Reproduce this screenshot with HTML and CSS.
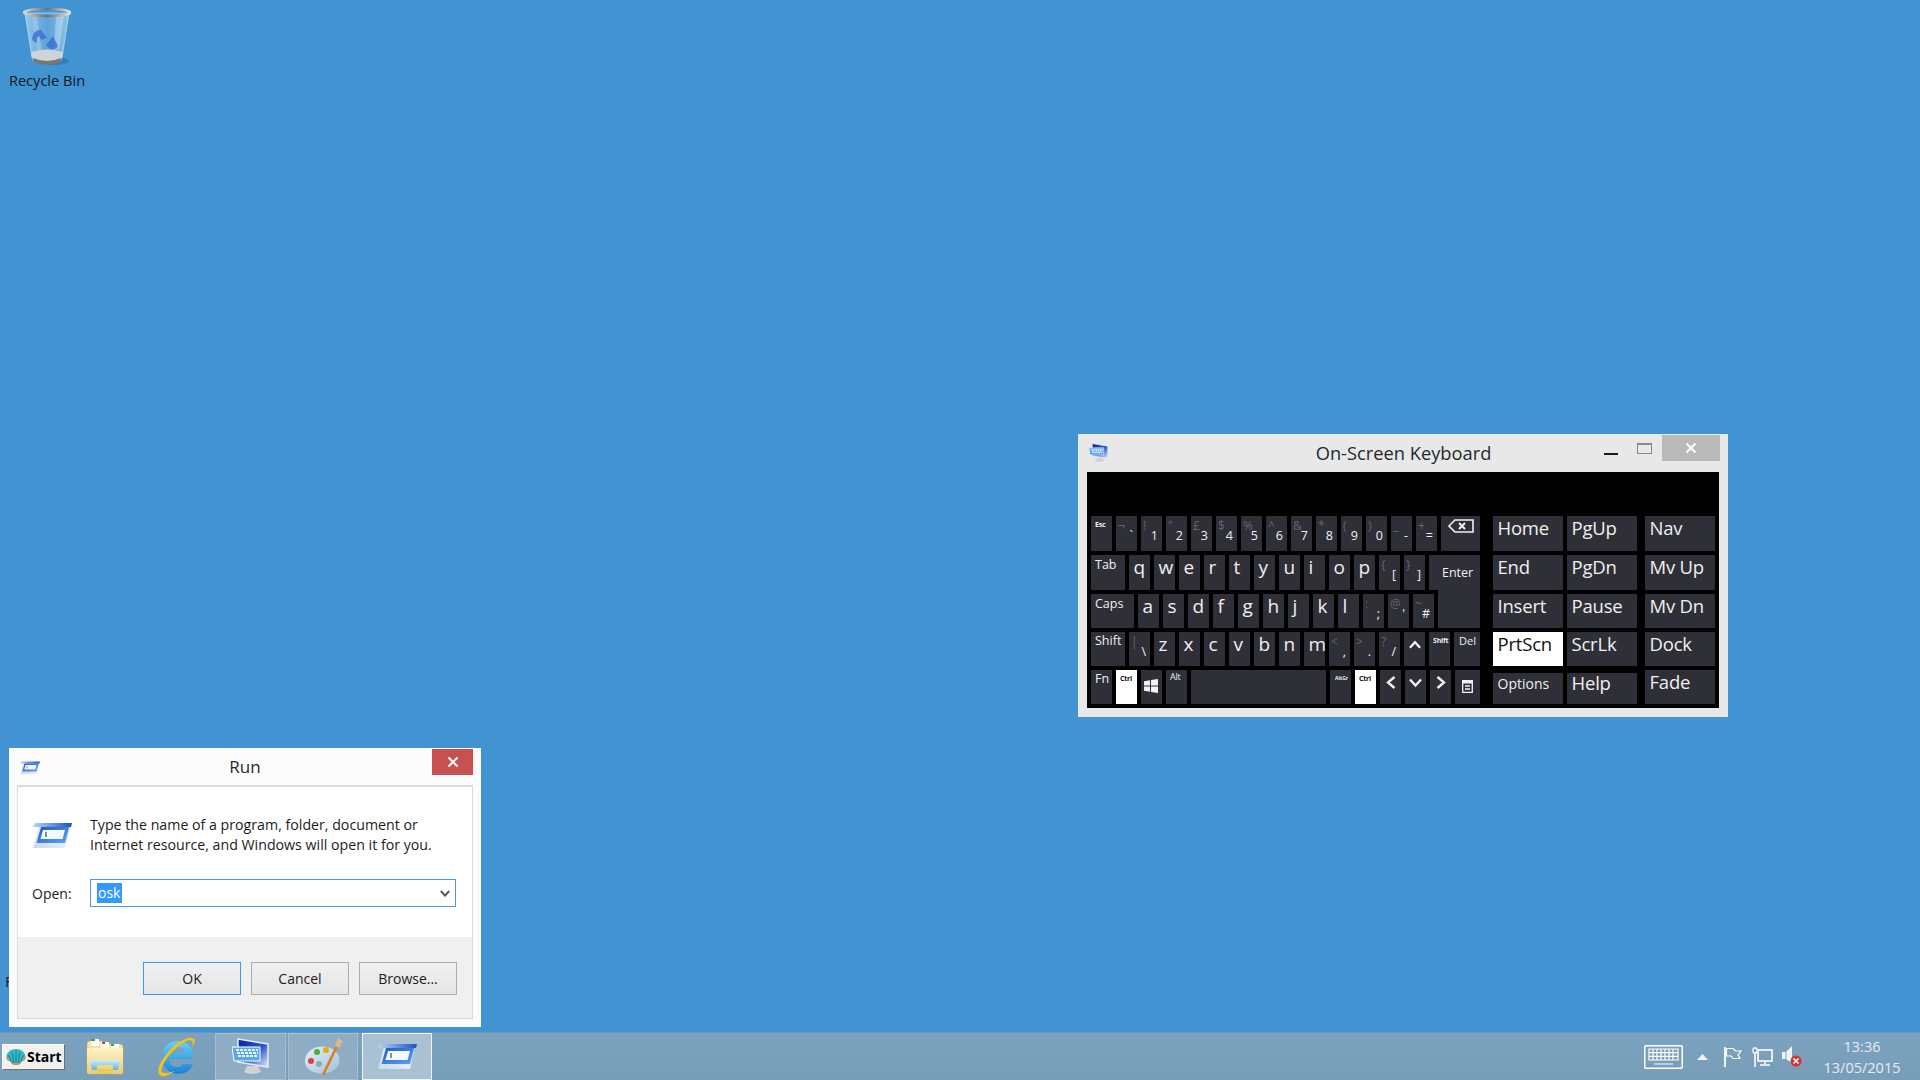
FILE: index.html
```html
<!DOCTYPE html>
<html lang="en">
<head>
    <meta charset="UTF-8">
    <meta name="viewport" content="width=device-width, initial-scale=1.0">
    <title>Desktop</title>
    <link rel="stylesheet" href="styles.css">
</head>
<body>
    <svg class="defs" width="0" height="0">
        <defs>
            <linearGradient id="runTop" x1="0" x2="1" y1="0" y2="0">
                <stop offset="0" stop-color="#b8d4f2"/>
                <stop offset="1" stop-color="#1c50c0"/>
            </linearGradient>
            <linearGradient id="runBody" x1="0" x2="1" y1="1" y2="0">
                <stop offset="0" stop-color="#c8d8ee"/>
                <stop offset="0.5" stop-color="#e4eefa"/>
                <stop offset="1" stop-color="#a8c8f0"/>
            </linearGradient>
            <linearGradient id="runInner" x1="0" x2="1" y1="0" y2="1">
                <stop offset="0" stop-color="#1f58cc"/>
                <stop offset="1" stop-color="#5aa4f2"/>
            </linearGradient>
            <linearGradient id="glass" x1="0" x2="1" y1="0" y2="0">
                <stop offset="0" stop-color="#a8d2ee" stop-opacity="0.85"/>
                <stop offset="0.5" stop-color="#6fb2e2" stop-opacity="0.55"/>
                <stop offset="1" stop-color="#a4d0ec" stop-opacity="0.8"/>
            </linearGradient>
            <linearGradient id="rim" x1="0" x2="1" y1="0" y2="0">
                <stop offset="0" stop-color="#d6d6d6"/>
                <stop offset="0.5" stop-color="#6f6f6f"/>
                <stop offset="1" stop-color="#e2e2e2"/>
            </linearGradient>
            <linearGradient id="folderBack" x1="0" x2="0" y1="0" y2="1">
                <stop offset="0" stop-color="#fbe9a4"/>
                <stop offset="1" stop-color="#e8c366"/>
            </linearGradient>
            <linearGradient id="folderFront" x1="0" x2="0" y1="0" y2="1">
                <stop offset="0" stop-color="#fdf3c6"/>
                <stop offset="1" stop-color="#eccb72"/>
            </linearGradient>
            <linearGradient id="folderBlue" x1="0" x2="0" y1="0" y2="1">
                <stop offset="0" stop-color="#cdeefc"/>
                <stop offset="1" stop-color="#61b2e4"/>
            </linearGradient>
            <linearGradient id="ieBlue" x1="0" x2="0" y1="0" y2="1">
                <stop offset="0" stop-color="#66d0f6"/>
                <stop offset="1" stop-color="#1a83d6"/>
            </linearGradient>
            <linearGradient id="screen" x1="0" x2="1" y1="0" y2="1">
                <stop offset="0" stop-color="#0a1f9c"/>
                <stop offset="0.55" stop-color="#2a58c8"/>
                <stop offset="1" stop-color="#e4eefb"/>
            </linearGradient>
            <linearGradient id="palette" x1="0" x2="1" y1="0" y2="1">
                <stop offset="0" stop-color="#e6f0f6"/>
                <stop offset="1" stop-color="#9fc1d8"/>
            </linearGradient>
            <symbol id="runIcon" viewBox="0 0 40 26">
                <path d="M7 3H38L33 25H1Z" fill="url(#runBody)"/>
                <path d="M3 0H40L39 4H1Z" fill="url(#runTop)"/>
                <path d="M9 4H37L33 20H4.500Z" fill="url(#runInner)"/>
                <path d="M11 7H33L30.500 16H8.500Z" fill="#f4f9ff"/>
                <path d="M14 9V14" stroke="#444" stroke-width="1.200"/>
            </symbol>
            <symbol id="oskIcon" viewBox="0 0 38 38">
                <path d="M6 1L36 6V29L6 24Z" fill="url(#screen)" stroke="#e4ecf6" stroke-width="1.500"/>
                <path d="M15 28H26L29 34Q20 38 12 34Z" fill="#d2d2d2"/>
                <path d="M0 9H28V23H2Z" fill="#5ca6ea" stroke="#ffffff"/>
                <path d="M4 12H26M5 15H26M6 18H26" stroke="#e8f4ff" stroke-width="2" stroke-dasharray="3 1"/>
            </symbol>
        </defs>
    </svg>

    <main class="desktop">
        <div class="desk-icon">
            <svg class="bin" viewBox="0 0 48 58" width="48" height="58">
                <ellipse cx="30" cy="53" rx="16" ry="4" fill="#2d6f9f" opacity="0.6"/>
                <path d="M2 5L9 50Q24 57 39 50L46 5Z" fill="url(#glass)" stroke="#cfe6f5" stroke-opacity="0.6"/>
                <path d="M9 8L14 42L19 43L14 8Z" fill="#ffffff" opacity="0.2"/>
                <path d="M33 8L31 42L36 41L41 8Z" fill="#ffffff" opacity="0.3"/>
                <path d="M9 32Q10 21 18 22L24 30L18 32L16 28Q13 29 14 35ZM23 37L30 28L33 34Q38 42 27 41Z" fill="#3a6ed0" opacity="0.8"/>
                <ellipse cx="24" cy="4.500" rx="23" ry="3.500" fill="none" stroke="url(#rim)" stroke-width="2.500"/>
                <path d="M8 44Q24 39 40 44L38 53Q24 59 10 53Z" fill="#cfd4d8"/>
                <path d="M10 50Q24 56 38 50L37.500 54Q24 60 10.500 54Z" fill="#777"/>
            </svg>
            <span class="desk-label">Recycle Bin</span>
        </div>

        <span class="stray-label">F</span>

        <section class="osk">
            <header class="osk-title">
                <svg class="osk-small" width="20" height="20"><use href="#oskIcon"/></svg>
                <h1>On-Screen Keyboard</h1>
                <div class="osk-controls">
                    <span class="ctl-min"></span>
                    <span class="ctl-max"></span>
                    <span class="ctl-close">
                        <svg width="12" height="12" viewBox="0 0 12 12"><path d="M1.500 1.500L10.500 10.500M10.500 1.500L1.500 10.500" stroke="#fff" stroke-width="2"/></svg>
                    </span>
                </div>
            </header>
            <div class="kb">
                <div class="keys-main">
                    <div class="kb-row r35">
                        <div class="key tiny">Esc</div>
                        <div class="key dual"><span class="sup">¬</span><span class="main">`</span></div>
                        <div class="key dual"><span class="sup">!</span><span class="main">1</span></div>
                        <div class="key dual"><span class="sup">"</span><span class="main">2</span></div>
                        <div class="key dual"><span class="sup">£</span><span class="main">3</span></div>
                        <div class="key dual"><span class="sup">$</span><span class="main">4</span></div>
                        <div class="key dual"><span class="sup">%</span><span class="main">5</span></div>
                        <div class="key dual"><span class="sup">^</span><span class="main">6</span></div>
                        <div class="key dual"><span class="sup">&amp;</span><span class="main">7</span></div>
                        <div class="key dual"><span class="sup">*</span><span class="main">8</span></div>
                        <div class="key dual"><span class="sup">(</span><span class="main">9</span></div>
                        <div class="key dual"><span class="sup">)</span><span class="main">0</span></div>
                        <div class="key dual"><span class="sup">_</span><span class="main">-</span></div>
                        <div class="key dual"><span class="sup">+</span><span class="main">=</span></div>
                        <div class="key w39 icon-key top">
                            <svg width="26" height="14" viewBox="0 0 26 14"><path d="M1 7L7 1H25V13H7Z" fill="none" stroke="#f2f2f2" stroke-width="1.600"/><path d="M11 4L17 10M17 4L11 10" stroke="#f2f2f2" stroke-width="2"/></svg>
                        </div>
                    </div>
                    <div class="kb-row r35">
                        <div class="key w34 label">Tab</div>
                        <div class="key letter">q</div>
                        <div class="key letter">w</div>
                        <div class="key letter">e</div>
                        <div class="key letter">r</div>
                        <div class="key letter">t</div>
                        <div class="key letter">y</div>
                        <div class="key letter">u</div>
                        <div class="key letter">i</div>
                        <div class="key letter">o</div>
                        <div class="key letter">p</div>
                        <div class="key dual"><span class="sup">{</span><span class="main">[</span></div>
                        <div class="key dual"><span class="sup">}</span><span class="main">]</span></div>
                        <div class="key w51 enter">Enter</div>
                    </div>
                    <div class="kb-row r34">
                        <div class="key w43 label">Caps</div>
                        <div class="key letter">a</div>
                        <div class="key letter">s</div>
                        <div class="key letter">d</div>
                        <div class="key letter">f</div>
                        <div class="key letter">g</div>
                        <div class="key letter">h</div>
                        <div class="key letter">j</div>
                        <div class="key letter">k</div>
                        <div class="key letter">l</div>
                        <div class="key dual"><span class="sup">:</span><span class="main">;</span></div>
                        <div class="key dual"><span class="sup">@</span><span class="main">'</span></div>
                        <div class="key dual"><span class="sup">~</span><span class="main">#</span></div>
                        <div class="key w42 enter-foot"></div>
                    </div>
                    <div class="kb-row r34">
                        <div class="key w34 label raised">Shift</div>
                        <div class="key dual"><span class="sup">|</span><span class="main">\</span></div>
                        <div class="key letter">z</div>
                        <div class="key letter">x</div>
                        <div class="key letter">c</div>
                        <div class="key letter">v</div>
                        <div class="key letter">b</div>
                        <div class="key letter">n</div>
                        <div class="key letter">m</div>
                        <div class="key dual"><span class="sup">&lt;</span><span class="main">,</span></div>
                        <div class="key dual"><span class="sup">&gt;</span><span class="main">.</span></div>
                        <div class="key dual"><span class="sup">?</span><span class="main">/</span></div>
                        <div class="key icon-key arrow">
                            <svg width="12" height="9" viewBox="0 0 13 9"><path d="M1 8L6.500 2L12 8" fill="none" stroke="#f2f2f2" stroke-width="2.400"/></svg>
                        </div>
                        <div class="key tiny">Shift</div>
                        <div class="key w26 del">Del</div>
                    </div>
                    <div class="kb-row r34">
                        <div class="key label raised">Fn</div>
                        <div class="key tiny on">Ctrl</div>
                        <div class="key icon-key win-key">
                            <svg width="14" height="14" viewBox="0 0 14 14"><path d="M0 2.200L6 1.300V6.600H0ZM7 1.100L14 0V6.600H7ZM0 7.400H6V12.700L0 11.800ZM7 7.400H14V14L7 12.900Z" fill="#f2f2f2"/></svg>
                        </div>
                        <div class="key tiny alt">Alt</div>
                        <div class="key w135"></div>
                        <div class="key tiny altgr">AltGr</div>
                        <div class="key tiny on">Ctrl</div>
                        <div class="key icon-key arrow">
                            <svg width="10" height="13" viewBox="0 0 10 13"><path d="M8.500 1L2 6.500L8.500 12" fill="none" stroke="#f2f2f2" stroke-width="2.400"/></svg>
                        </div>
                        <div class="key icon-key arrow">
                            <svg width="13" height="10" viewBox="0 0 13 10"><path d="M1 1.500L6.500 7.500L12 1.500" fill="none" stroke="#f2f2f2" stroke-width="2.400"/></svg>
                        </div>
                        <div class="key icon-key arrow">
                            <svg width="10" height="13" viewBox="0 0 10 13"><path d="M1.500 1L8 6.500L1.500 12" fill="none" stroke="#f2f2f2" stroke-width="2.400"/></svg>
                        </div>
                        <div class="key w25 icon-key menu-key">
                            <svg width="11" height="13" viewBox="0 0 11 13"><path d="M.7.700H10.300V12.300H.7Z" fill="none" stroke="#f2f2f2" stroke-width="1.300"/><path d="M3 6H8M3 9H8" stroke="#f2f2f2" stroke-width="1.300"/><path d="M0 1H11V3.500H0Z" fill="#f2f2f2"/></svg>
                        </div>
                    </div>
                </div>
                <div class="keys-side">
                    <div class="kb-row r35">
                        <div class="key wide">Home</div>
                        <div class="key wide">PgUp</div>
                        <div class="key wide far">Nav</div>
                    </div>
                    <div class="kb-row r35">
                        <div class="key wide">End</div>
                        <div class="key wide">PgDn</div>
                        <div class="key wide far">Mv Up</div>
                    </div>
                    <div class="kb-row r34">
                        <div class="key wide">Insert</div>
                        <div class="key wide">Pause</div>
                        <div class="key wide far">Mv Dn</div>
                    </div>
                    <div class="kb-row r34">
                        <div class="key wide on">PrtScn</div>
                        <div class="key wide">ScrLk</div>
                        <div class="key wide far">Dock</div>
                    </div>
                    <div class="kb-row r34">
                        <div class="key wide short options">Options</div>
                        <div class="key wide short">Help</div>
                        <div class="key wide far">Fade</div>
                    </div>
                </div>
            </div>
        </section>

        <section class="run">
            <header class="run-title">
                <svg class="run-small" width="20" height="14"><use href="#runIcon"/></svg>
                <h2>Run</h2>
                <span class="run-close">
                    <svg width="12" height="12" viewBox="0 0 12 12"><path d="M1.500 1.500L10.500 10.500M10.500 1.500L1.500 10.500" stroke="#fff" stroke-width="2"/></svg>
                </span>
            </header>
            <div class="run-panel">
                <div class="run-body">
                    <div class="run-intro">
                        <svg width="40" height="26"><use href="#runIcon"/></svg>
                        <p>Type the name of a program, folder, document or<br>Internet resource, and Windows will open it for you.</p>
                    </div>
                    <div class="run-open">
                        <label>Open:</label>
                        <div class="combo">
                            <span class="combo-sel">osk</span>
                            <svg width="10" height="7" viewBox="0 0 12 8"><path d="M1 1L6 6.500L11 1" fill="none" stroke="#555" stroke-width="2.400"/></svg>
                        </div>
                    </div>
                </div>
                <div class="run-foot">
                    <button class="btn btn-default">OK</button>
                    <button class="btn">Cancel</button>
                    <button class="btn">Browse...</button>
                </div>
            </div>
        </section>
    </main>

    <footer class="taskbar">
        <div class="start">
            <svg width="20" height="18" viewBox="0 0 20 18">
                <path d="M10 1C4 1 0 5 0.500 10C1 13 3 13 4 13L6 16H14L16 13C17 13 19 13 19.500 10C20 5 16 1 10 1Z" fill="#35b6c6"/>
                <path d="M10 3V15M6 4L8 15M14 4L12 15M2.500 7L6 15M17.500 7L14 15" stroke="#0d7a96" stroke-width="0.800"/>
                <path d="M0.500 10C2 7 3 11 4 13L1.500 12ZM19.500 10C18 7 17 11 16 13L18.500 12Z" fill="#f08a3c"/>
                <path d="M6 15H14L13 17H7Z" fill="#f08a3c"/>
            </svg>
            <span>Start</span>
        </div>
        <div class="task-pin pin-folder">
            <svg width="40" height="38" viewBox="0 0 40 38">
                <path d="M2 6Q2 3 5 3H17L20 6H35Q38 6 38 9V34Q38 36 36 36H4Q2 36 2 34Z" fill="url(#folderBack)" stroke="#c8a858" stroke-width="0.600"/>
                <path d="M6 1H14V8H6ZM16 4H24V10H16ZM26 6H34V11H26Z" fill="#fdfdfd"/>
                <path d="M6 1H10V3H6ZM26 6H29V8H26Z" fill="#4aa040"/>
                <path d="M17 4H20V6H17Z" fill="#d03a30"/>
                <path d="M2 10H38V34Q38 36 36 36H28V32H12V36H4Q2 36 2 34Z" fill="url(#folderFront)"/>
                <path d="M5 22H35L33 32H28V27H12V32H7Z" fill="url(#folderBlue)"/>
                <path d="M12 31H28V36H12Z" fill="#eccb5c"/>
            </svg>
        </div>
        <div class="task-pin pin-ie">
            <svg width="40" height="42" viewBox="0 0 40 42">
                <path d="M12 23H36C37 11 30 5 21 5C11 5 5 12 5 22C5 32 13 38 21 38C29 38 34 34 36 28H25C24 31 23 31 20 31C15 31 12 28 12 23ZM12 17C13 13 17 11 20 11C24 11 28 13 28 17Z" fill="url(#ieBlue)" fill-rule="evenodd"/>
                <path d="M37 3C33 -1 21 5 12 15C3 25 -1 35 3 39C6 42 12 39 18 35C12 37 7 38 5 36C3 33 7 25 15 16C23 8 32 2 35 5C36 6 36 9 34 12C37 9 39 5 37 3Z" fill="#f2c21a"/>
            </svg>
        </div>
        <div class="task-btn">
            <svg width="38" height="38"><use href="#oskIcon"/></svg>
        </div>
        <div class="task-btn">
            <svg width="40" height="40" viewBox="0 0 40 40">
                <path d="M2 24C2 14 13 8 24 10C34 12 38 20 36 27C34 34 24 38 14 36C6 34 2 30 2 24Z" fill="url(#palette)"/>
                <circle cx="8" cy="24" r="3" fill="#d8423a"/>
                <circle cx="14" cy="15" r="3" fill="#4caf3c"/>
                <circle cx="23" cy="13" r="3" fill="#f0a51c"/>
                <circle cx="16" cy="27" r="3" fill="#8fa9bd"/>
                <path d="M36 5L20 38" stroke="#d97f1c" stroke-width="2.600"/>
                <path d="M32 9L35 1L40 4L36 11Z" fill="#d8b98a"/>
            </svg>
        </div>
        <div class="task-btn active">
            <svg width="40" height="26"><use href="#runIcon"/></svg>
        </div>
        <div class="tray">
            <svg class="tray-kbd" width="39" height="24" viewBox="0 0 39 24">
                <rect x="0.750" y="0.750" width="37.500" height="22.500" rx="1" fill="none" stroke="#fff" stroke-width="1.500"/>
                <path d="M5 4H34V15H5ZM5 7.700H34M5 11.300H34M9 4V15M13 4V15M17 4V15M21 4V15M25 4V15M29 4V15M10 19H29" fill="none" stroke="#fff" stroke-width="1.200"/>
            </svg>
            <svg class="tray-arrow" width="11" height="6" viewBox="0 0 11 6"><path d="M0 6L5.500 0L11 6Z" fill="#eef3f7"/></svg>
            <svg class="tray-flag" width="20" height="20" viewBox="0 0 20 20"><path d="M2 0V20" stroke="#fff" stroke-width="1.800"/><path d="M3.500 1.500H10L12.500 4H18L15 8L17 11.500H10L8 9H3.500Z" fill="none" stroke="#fff" stroke-width="1.200"/></svg>
            <svg class="tray-net" width="21" height="20" viewBox="0 0 21 20"><rect x="6" y="3" width="14" height="11" fill="none" stroke="#fff" stroke-width="1.600"/><path d="M13 14V17M8 18H18" stroke="#fff" stroke-width="1.600"/><rect x="1" y="1" width="4" height="5" rx="1.500" fill="#7a9eb9" stroke="#fff" stroke-width="1.300"/><path d="M3 6V20" stroke="#fff" stroke-width="1.600"/></svg>
            <svg class="tray-vol" width="20" height="21" viewBox="0 0 20 21"><path d="M0 6H4L10 0V17L4 13H0Z" fill="#eef3f7"/><path d="M4 6V13" stroke="#8aa" stroke-width="1"/><circle cx="14" cy="15" r="5.500" fill="#d8322c"/><path d="M11.500 12.500L16.500 17.500M16.500 12.500L11.500 17.500" stroke="#fff" stroke-width="1.600"/></svg>
            <div class="clock">
                <span>13:36</span>
                <span>13/05/2015</span>
            </div>
        </div>
    </footer>
</body>
</html>
```

FILE: styles.css
```css
* {
    box-sizing: border-box;
}
html, body {
    height: 100%;
}
body {
    margin: 0;
    display: flex;
    flex-direction: column;
    overflow: hidden;
    font-family: 'Open Sans', 'Noto Sans', sans-serif;
    background-color: #4293d1;
    color: #1c1c1c;
}
.defs {
    position: absolute;
}
.desktop {
    position: relative;
    flex: 1;
}

/* desktop icon */
.desk-icon {
    position: absolute;
    left: 0;
    top: 8px;
    width: 94px;
    display: flex;
    flex-direction: column;
    align-items: center;
}
.bin {
    display: block;
}
.desk-label {
    margin-top: 4px;
    font-size: 14.600px;
    line-height: 20px;
    color: #10181e;
}
.stray-label {
    position: absolute;
    left: 5px;
    top: 971px;
    font-size: 15px;
    line-height: 20px;
}

/* on-screen keyboard */
.osk {
    position: absolute;
    left: 1078px;
    top: 434px;
    width: 650px;
    height: 283px;
    padding: 0 9px;
    background-color: #e8e8e8;
}
.osk-title {
    display: grid;
    grid-template-columns: 1fr auto 1fr;
    height: 38px;
    margin-right: -1px;
}
.osk-small {
    margin: 9px 0 0 2px;
}
.osk-title h1 {
    margin: 5px 0 0;
    font-size: 18.300px;
    font-weight: 400;
    line-height: 28px;
    color: #25282c;
}
.osk-controls {
    display: flex;
    justify-content: flex-end;
    align-items: flex-start;
}
.ctl-min {
    width: 14px;
    height: 2px;
    margin-top: 19px;
    background-color: #1a1a1a;
}
.ctl-max {
    width: 15px;
    height: 11px;
    margin: 9px 0 0 19px;
    border: 1px solid #8a8a8a;
    border-top-width: 2px;
}
.ctl-close {
    display: flex;
    align-items: center;
    justify-content: center;
    width: 58px;
    height: 26px;
    margin: 1px 0 0 10px;
    background-color: #bababa;
}
.kb {
    display: flex;
    gap: 13px;
    width: 632px;
    height: 236px;
    padding: 44px 4px 4px;
    background-color: #000;
}
.keys-main, .keys-side {
    display: flex;
    flex-direction: column;
    gap: 4px;
}
.keys-main {
    width: 389px;
}
.kb-row {
    display: flex;
    gap: 4px;
}
.r35 {
    height: 35px;
}
.r34 {
    height: 34px;
}
.key {
    flex: none;
    width: 21px;
    background-color: #2f2f38;
    color: #f0f0f0;
}
.key.on {
    background-color: #fff;
    color: #111;
}
.w25 { width: 25px; }
.w26 { width: 26px; }
.w34 { width: 34px; }
.w39 { width: 39px; }
.w42 { width: 42px; }
.w43 { width: 43px; }
.w51 { width: 51px; }
.w135 { width: 135px; }

.tiny {
    padding: 4px 0 0 4px;
    font-size: 7px;
    font-weight: 700;
    line-height: 10px;
    letter-spacing: -0.2px;
}
.alt {
    padding-top: 2px;
    font-size: 9px;
    font-weight: 400;
}
.altgr {
    padding: 3px 0 0 5px;
    font-size: 5px;
    letter-spacing: 0;
}
.label {
    padding: 1px 0 0 4px;
    font-size: 12.500px;
    line-height: 18px;
}
.label.raised {
    padding-top: 0;
}
.del {
    padding: 0 0 0 5px;
    font-size: 11px;
    line-height: 18px;
}
.letter {
    padding: 0 0 0 4.500px;
    font-size: 19px;
    line-height: 25px;
}
.dual {
    display: flex;
    flex-direction: column;
    padding: 3px 4px 0 2px;
}
.sup {
    height: 9px;
    font-size: 12px;
    line-height: 14px;
    color: #65656c;
}
.main {
    align-self: flex-end;
    font-size: 12.500px;
    line-height: 16px;
}
.icon-key {
    display: flex;
    align-items: center;
    justify-content: center;
}
.icon-key.top {
    align-items: flex-start;
    padding-top: 3px;
}
.arrow {
    padding-bottom: 9px;
}
.win-key {
    padding: 0 1px 2px 0;
}
.menu-key {
    padding-bottom: 2px;
}
.enter {
    padding: 9px 0 0 13px;
    font-size: 12.500px;
    line-height: 18px;
}
.enter-foot {
    margin-top: -4px;
}
.wide {
    width: 70px;
    padding-left: 4.500px;
    font-size: 18.500px;
    line-height: 23px;
    letter-spacing: -0.2px;
}
.wide.far {
    margin-left: 4px;
}
.short {
    height: 31px;
    margin-top: 3px;
    line-height: 20px;
}
.options {
    font-size: 14px;
    line-height: 22px;
    letter-spacing: 0;
}

/* run dialog */
.run {
    position: absolute;
    left: 9px;
    top: 748px;
    width: 472px;
    height: 279px;
    padding: 0 8px 8px;
    background-color: #fcfcfc;
}
.run-title {
    position: relative;
    height: 37px;
    text-align: center;
}
.run-small {
    position: absolute;
    left: 3px;
    top: 13px;
}
.run-title h2 {
    margin: 0;
    padding-top: 5px;
    font-size: 17px;
    font-weight: 400;
    line-height: 28px;
    color: #25282c;
}
.run-close {
    position: absolute;
    right: 0;
    top: 1px;
    display: flex;
    align-items: center;
    justify-content: center;
    width: 41px;
    height: 26px;
    background-color: #c75050;
}
.run-panel {
    display: flex;
    flex-direction: column;
    height: 234px;
    border: 2px solid #dadada;
    border-width: 2px 1px 1px 1px;
    background-color: #f0f0f0;
}
.run-body {
    height: 150px;
    padding: 34px 15px 0 14px;
    background-color: #fff;
}
.run-intro {
    display: flex;
    gap: 18px;
    height: 58px;
}
.run-intro svg {
    margin-top: 2px;
    flex: none;
}
.run-intro p {
    margin: -6px 0 0;
    font-size: 14.200px;
    line-height: 20px;
}
.run-open {
    display: flex;
    align-items: center;
}
.run-open label {
    width: 58px;
    padding-top: 1px;
    font-size: 14px;
}
.combo {
    display: flex;
    align-items: center;
    justify-content: space-between;
    width: 366px;
    height: 28px;
    padding: 0 5px 0 6px;
    border: 1px solid #4a94dc;
    background-color: #fff;
}
.combo-sel {
    height: 20px;
    padding: 0 2px 0 1px;
    font-size: 14px;
    line-height: 20px;
    background-color: #3399ff;
    color: #fff;
}
.run-foot {
    display: flex;
    gap: 10px;
    padding: 25px 15px 0 125px;
}
.btn {
    width: 98px;
    height: 33px;
    padding: 0;
    border: 1px solid #adadad;
    background: linear-gradient(#f0f0f0, #e5e5e5);
    font-family: inherit;
    font-size: 14px;
    color: #1c1c1c;
}
.btn-default {
    border-color: #3399ff;
}

/* taskbar */
.taskbar {
    flex: none;
    display: flex;
    align-items: center;
    height: 48px;
    background: linear-gradient(#7ba2bf, #789db8);
    border-top: 1px solid #6f97b5;
}
.start {
    display: flex;
    align-items: center;
    gap: 1px;
    width: 63px;
    height: 26px;
    margin: 0 0 0 2px;
    padding-left: 3px;
    border: 1px solid;
    border-color: #fff #6f6f6f #6f6f6f #fff;
    background-color: #f0f0f0;
    font-size: 14px;
    font-weight: 700;
    color: #000;
}
.task-pin {
    display: flex;
    align-items: center;
    justify-content: center;
}
.pin-folder {
    width: 40px;
    margin-left: 20px;
}
.pin-ie {
    width: 40px;
    margin-left: 32px;
}
.task-btn {
    display: flex;
    align-items: center;
    justify-content: center;
    flex: none;
    width: 70px;
    height: 47px;
    margin-left: 2px;
    border: 1px solid #a5bfd2;
    background-color: #8eacc4;
}
.pin-ie + .task-btn {
    width: 71px;
    margin-left: 18px;
}
.task-btn.active {
    margin-left: 4px;
    border-color: #eef4f8;
    border-width: 1.500px;
    background-color: #a9c1d3;
}
.tray {
    display: flex;
    align-items: center;
    margin-left: auto;
    height: 100%;
}
.tray-kbd { margin-right: 14px; }
.tray-arrow { margin-right: 15px; }
.tray-flag { margin-right: 9px; }
.tray-net { margin-right: 9px; }
.tray-vol { margin-right: 15px; }
.clock {
    display: flex;
    flex-direction: column;
    align-items: center;
    width: 90px;
    margin-right: 13px;
    font-size: 14.500px;
    line-height: 21px;
    color: #e6edf3;
}
```
